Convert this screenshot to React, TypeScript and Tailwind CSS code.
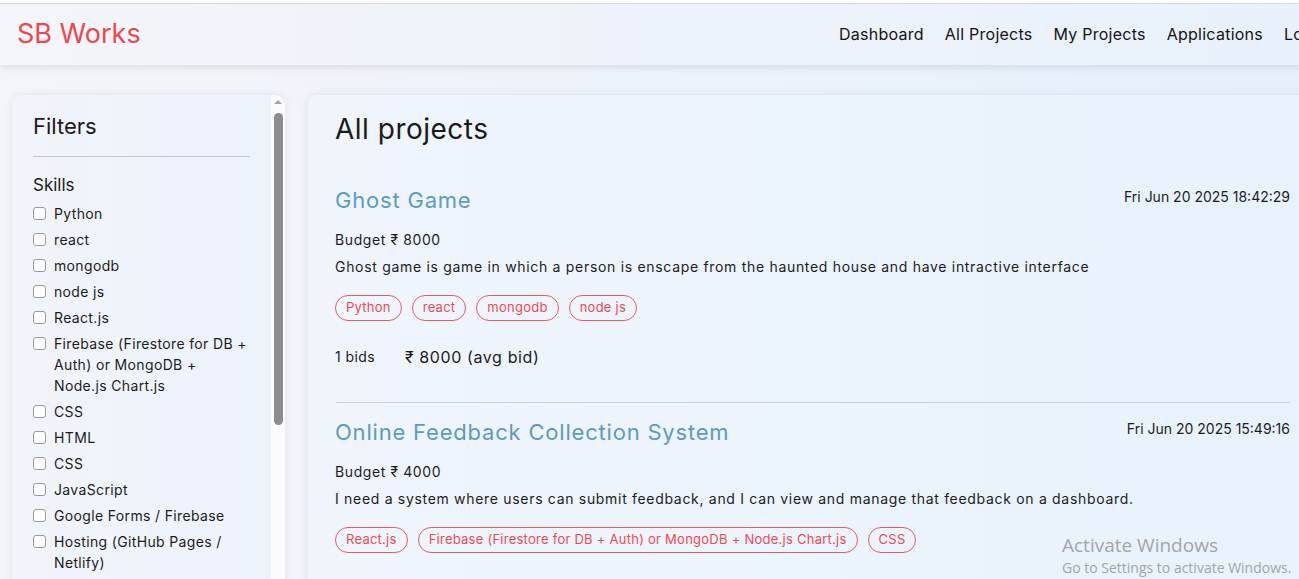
import React from 'react';

const skills = [
  'Python',
  'react',
  'mongodb',
  'node js',
  'React.js',
  'Firebase (Firestore for DB + Auth) or MongoDB + Node.js Chart.js',
  'CSS',
  'HTML',
  'CSS',
  'JavaScript',
  'Google Forms / Firebase',
  'Hosting (GitHub Pages / Netlify)',
];

const projects = [
  {
    id: 1,
    title: 'Ghost Game',
    date: 'Fri Jun 20 2025 18:42:29',
    budget: 8000,
    description:
      'Ghost game is game in which a person is enscape from the haunted house and have intractive interface',
    skills: ['Python', 'react', 'mongodb', 'node js'],
    bids: 1,
    avg: 8000,
  },
  {
    id: 2,
    title: 'Online Feedback Collection System',
    date: 'Fri Jun 20 2025 15:49:16',
    budget: 4000,
    description:
      'I need a system where users can submit feedback, and I can view and manage that feedback on a dashboard.',
    skills: ['React.js', 'Firebase (Firestore for DB + Auth) or MongoDB + Node.js Chart.js', 'CSS'],
    bids: 0,
    avg: 0,
  },
];

const navLinks = ['Dashboard', 'All Projects', 'My Projects', 'Applications', 'Logout'];

const App: React.FC = () => {
  return (
    <div className="relative h-[579px] w-full overflow-hidden bg-gradient-to-r from-[#f4f5f9] to-[#e5f0fb] font-['Inter',sans-serif] text-[#1c1c1c]">
      <div className="h-[3px] bg-white" />
      <div className="h-px bg-[#d9dadc]" />

      {/* navbar */}
      <nav className="relative z-10 flex h-[61px] items-center bg-gradient-to-r from-[#f3f5fa] to-[#e8f1fb] shadow-[0_4px_6px_rgba(0,0,0,0.07)]">
        <div className="w-[839px] shrink-0 pl-[17px] text-[27px] text-[#ee474c]">SB Works</div>
        <div className="-mt-[2px] flex shrink-0 gap-[21px] whitespace-nowrap text-[16px] tracking-[0.25px] text-[#141414]">
          {navLinks.map((link) => (
            <span key={link}>{link}</span>
          ))}
        </div>
      </nav>

      <div className="flex gap-[23px] pl-3 pt-[30px]">
        {/* filters sidebar */}
        <aside className="flex h-[520px] w-[273px] shrink-0 overflow-hidden rounded-[10px] bg-gradient-to-r from-[#f1f4fa] to-[#edf3fc] shadow-[0_0_8px_rgba(0,0,0,0.08)]">
          <div className="flex-1 pl-[21px] pr-[8px] pt-[15px]">
            <h2 className="text-[22px] leading-[32px]">Filters</h2>
            <hr className="mt-[14px] w-[217px] border-[#bfc3cb]" />
            <h3 className="mt-[15px] text-[17px] leading-[26px]">Skills</h3>
            <div className="mt-[5px] flex flex-col gap-[5px]">
              {skills.map((skill, i) => (
                <label key={i} className="flex gap-2 text-[14px] leading-[21px] tracking-[0.35px]">
                  <span className="mt-[4px] h-[13px] w-[13px] shrink-0 rounded-[3px] border border-[#9a9a9a] bg-white" />
                  <span className="w-[195px]">{skill}</span>
                </label>
              ))}
            </div>
          </div>
          <div className="flex w-[14px] flex-col items-center bg-[#fbfbfb]">
            <div className="mt-[5px] h-0 w-0 border-x-[4px] border-b-[4px] border-x-transparent border-b-[#a3a3a3]" />
            <div className="mt-[9px] h-[312px] w-[9px] rounded-full bg-[#8c8c8c]" />
          </div>
        </aside>

        {/* projects */}
        <main className="h-[520px] w-[1010px] shrink-0 rounded-[10px] bg-gradient-to-r from-[#f0f5fc] to-[#e7f2fc] pl-[27px] pr-[28px] pt-[14px] shadow-[0_0_8px_rgba(0,0,0,0.08)]">
          <h1 className="text-[28px] leading-[40px] tracking-[0.5px] text-[#1a1a1a]">All projects</h1>
          <div className="mt-[35px]">
            {projects.map((p, idx) => (
              <div key={p.id}>
                {idx > 0 && <hr className="mb-[13px] ml-px border-[#cbd1da]" />}
                <div className="flex items-start justify-between">
                  <h3 className="text-[22px] leading-[32px] tracking-[0.8px] text-[#5b9cbf]">{p.title}</h3>
                  <span className="mt-[3px] text-[14px] leading-[20px]">{p.date}</span>
                </div>
                <p className="mt-[14px] text-[14px] leading-[20px] tracking-[0.6px]">Budget ₹ {p.budget}</p>
                <p className="mt-[7px] text-[14px] leading-[20px] tracking-[0.69px]">{p.description}</p>
                <div className="mt-[18px] flex gap-[10px]">
                  {p.skills.map((s) => (
                    <span
                      key={s}
                      className="flex h-[26px] items-center rounded-full border border-[#e65d5f] px-[10px] text-[13px] tracking-[0.25px] text-[#f04b4f]"
                    >
                      {s}
                    </span>
                  ))}
                </div>
                <div className="mt-[24px] flex items-center gap-[30px]">
                  <span className="text-[14px] leading-[24px] tracking-[0.4px]">{p.bids} bids</span>
                  <span className="text-[16px] leading-[24px] tracking-[0.6px]">₹ {p.avg} (avg bid)</span>
                </div>
                <div className="h-[33px]" />
              </div>
            ))}
          </div>
        </main>
      </div>

      {/* OS watermark */}
      <div className="pointer-events-none absolute left-[1062px] top-[532px] font-['Open_Sans',sans-serif] text-[#a3a5a8]">
        <div className="text-[19px] leading-[26px]">Activate Windows</div>
        <div className="text-[14px] leading-[20px]">Go to Settings to activate Windows.</div>
      </div>
    </div>
  );
};

export default App;
